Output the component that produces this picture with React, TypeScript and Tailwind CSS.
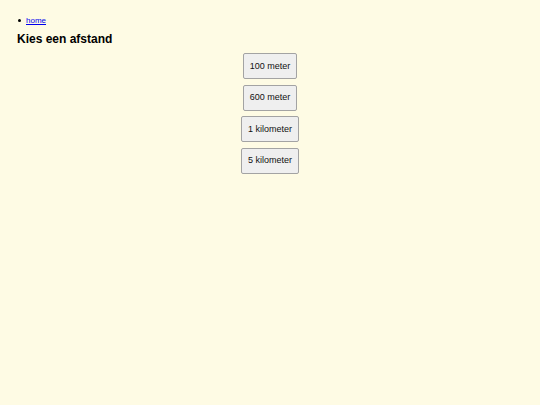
import React from "react";

const distances = ["100 meter", "600 meter", "1 kilometer", "5 kilometer"];

const App = () => {
  return (
    <div className="min-h-[405px] w-full bg-[#fefbe4] px-[17px] pt-[15px] font-['Liberation_Sans',Arial,sans-serif] text-black">
      <ul className="pl-[1px] text-[8px] leading-[11px]">
        <li className="flex items-center gap-[5px]">
          <span className="h-[3px] w-[3px] rounded-full bg-black" />
          <a href="#" className="text-[#0000ee] underline">home</a>
        </li>
      </ul>
      <h1 className="mt-[6px] text-[12px] font-bold leading-[14px]">Kies een afstand</h1>
      <div className="mt-[7px] flex flex-col items-center gap-[5.5px]">
        {distances.map((d) => (
          <button
            key={d}
            className="h-[26px] rounded-[2px] border border-[#a3a3a3] bg-[#efefef] px-[6px] text-[9px] leading-[11px] text-[#111]"
          >
            {d}
          </button>
        ))}
      </div>
    </div>
  );
};

export default App;
